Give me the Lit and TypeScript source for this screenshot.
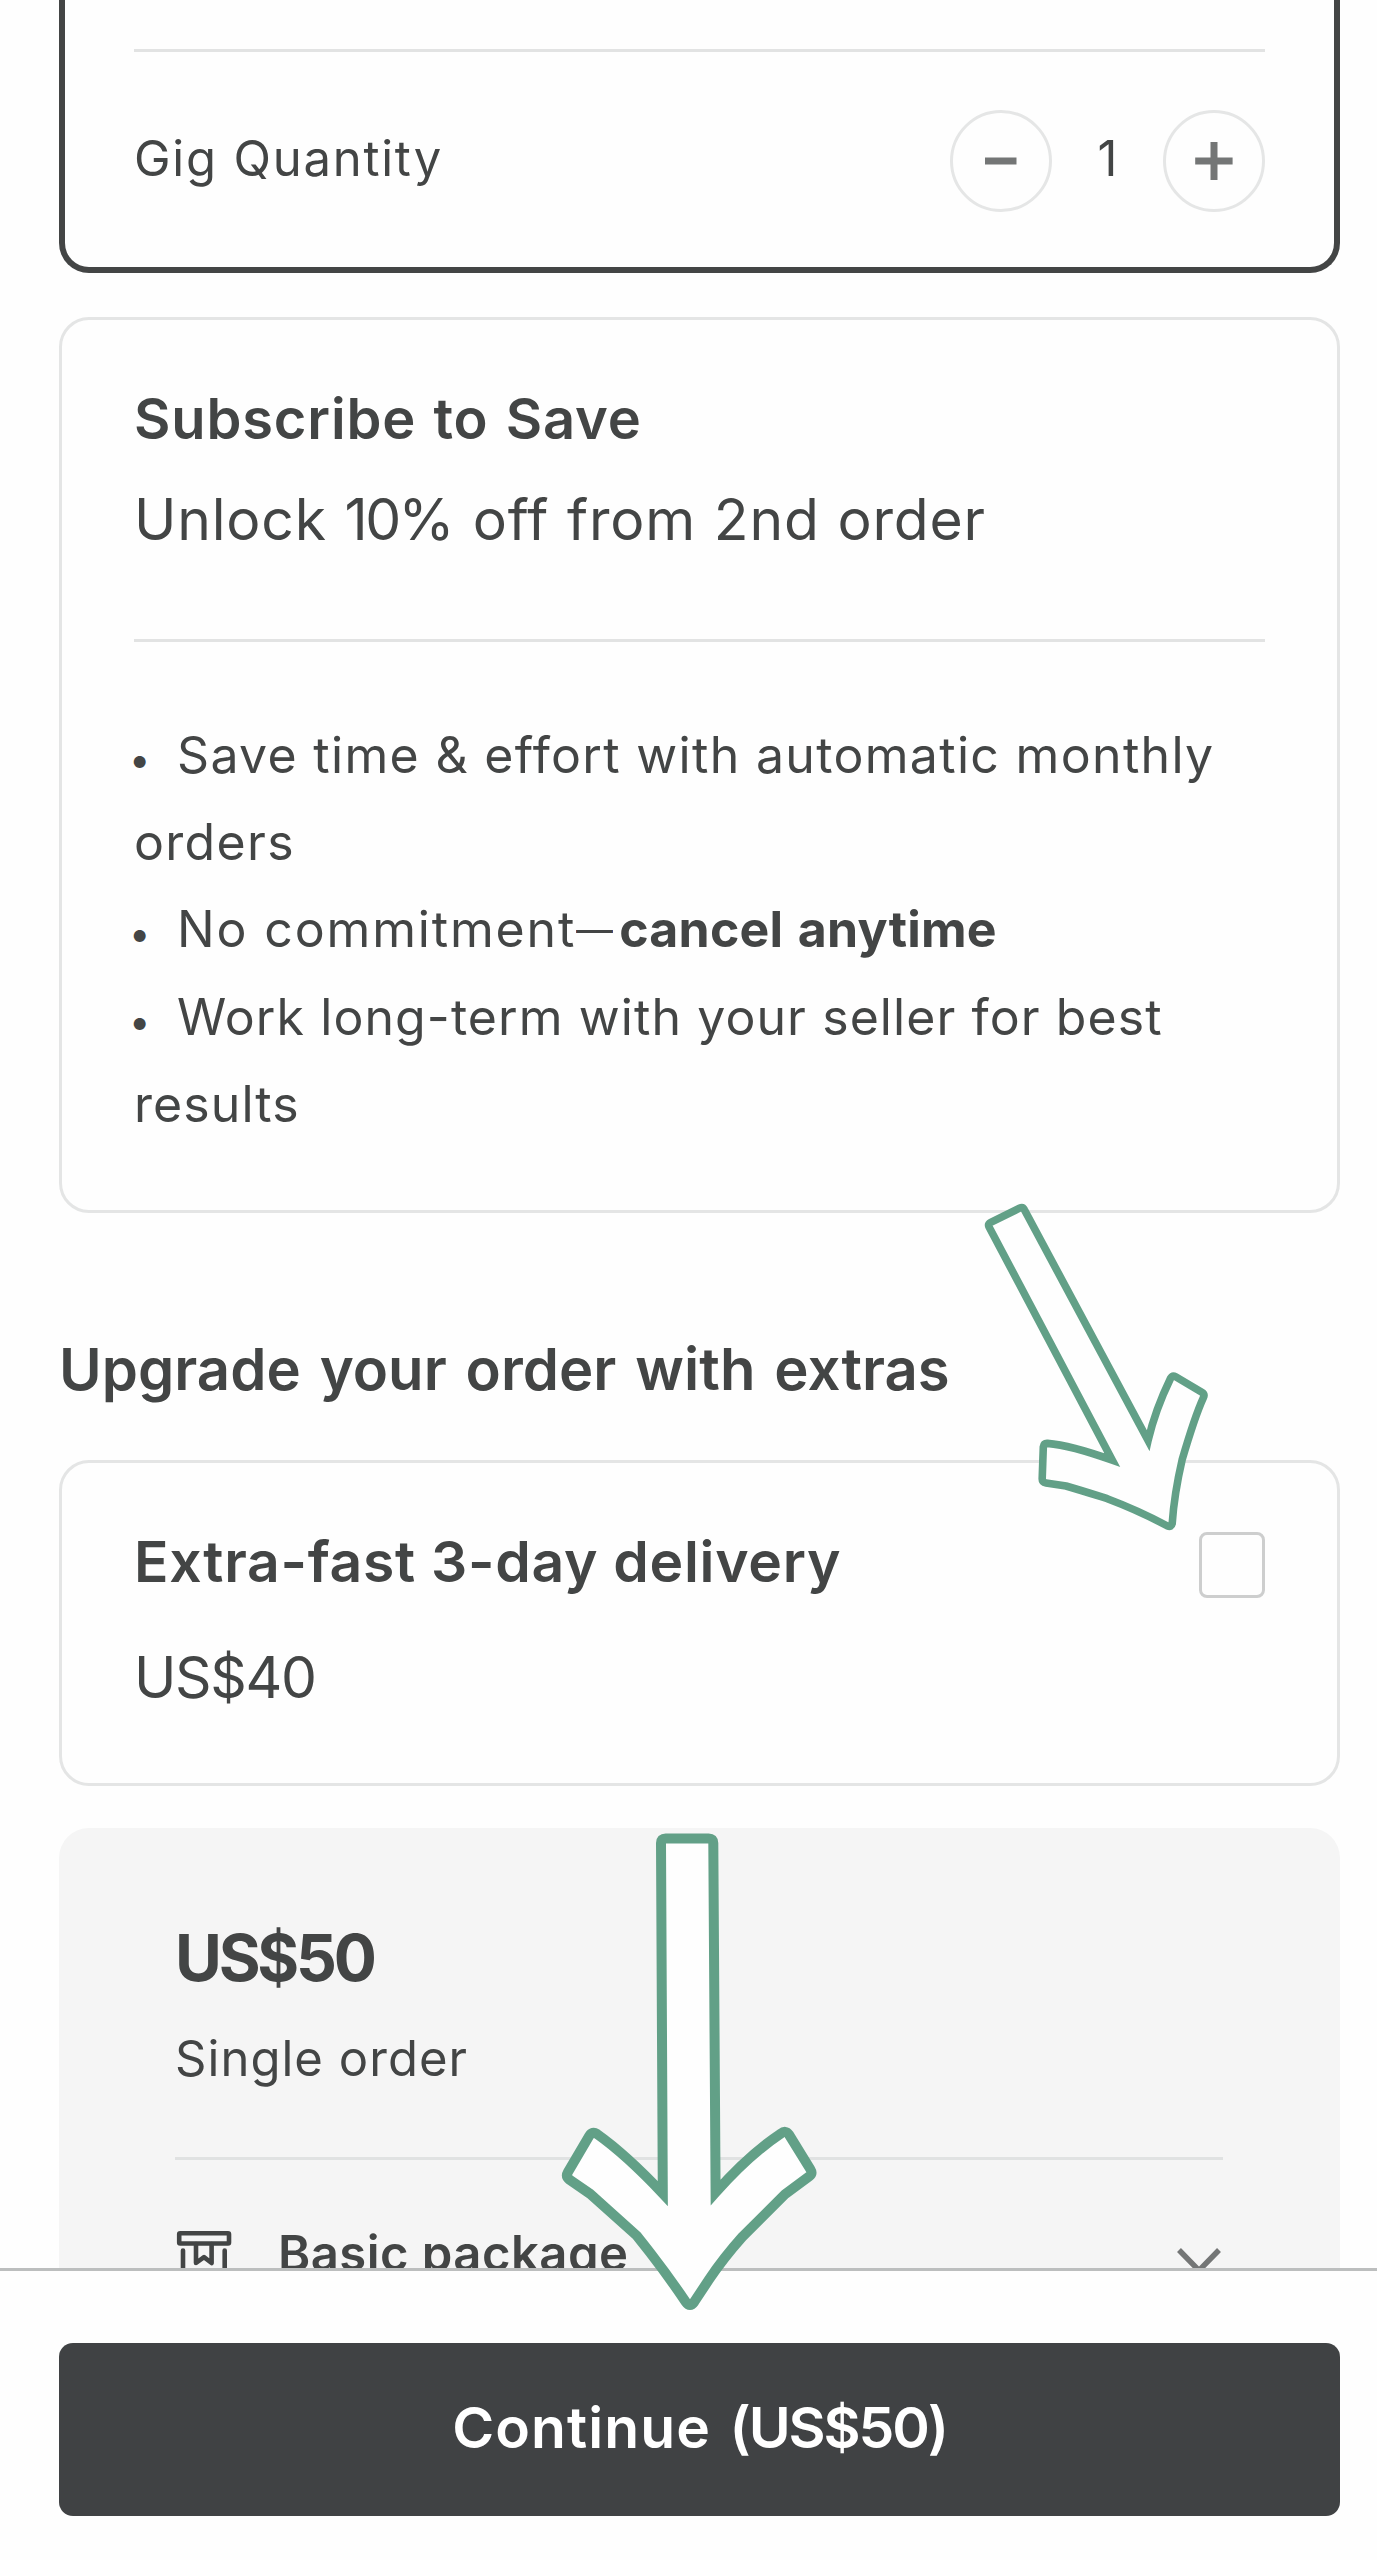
import { LitElement, html, css, svg } from "lit";
import { customElement, state } from "lit/decorators.js";

const minusIcon = html`<svg class="glyph" viewBox="0 0 40 40"><path d="M4 20H35.5" /></svg>`;
const plusIcon = html`<svg class="glyph" viewBox="0 0 40 40"><path d="M1.2 20H38.6M20 1V39" /></svg>`;

const packageIcon = html`
  <svg class="package" viewBox="0 0 58 56">
    <rect x="4.2" y="3.2" width="49.8" height="10.3" rx="1" />
    <path d="M8 20.5V53H49.7V20.5" />
    <path d="M21 14V33L29 27.2L36.6 33V14" />
  </svg>`;

const chevronIcon = html`
  <svg class="chevron" viewBox="0 0 46 26"><path d="M3 3L23 23.5L43 3" /></svg>`;

const deliveryArrow = svg`
  <path class="arrow slim" d="
    M989.2 1227.2 Q987.6 1224 990.8 1222.3
    L1019.5 1208.2 Q1022.8 1206.6 1024.4 1209.8
    L1148.1 1440.5 C1153.5 1417 1161 1398 1170.7 1378
    Q1172.6 1375 1175.7 1376.8
    L1201.8 1392.2 Q1205 1394.2 1203.4 1397.6
    C1195 1416 1188.5 1438 1182.2 1459.5 C1177 1482 1173.8 1500 1172.2 1523.5
    Q1171.4 1527.5 1167.5 1526
    C1148 1515.5 1128 1506.5 1107.3 1498.7 C1094 1494.5 1080 1490 1066 1486
    L1046 1482.9 Q1042 1482.2 1042.2 1478.5
    L1043.3 1447 Q1043.8 1443.2 1047.5 1443.4
    C1067 1445 1088 1451.5 1112.3 1460.2 Z" />`;

const continueArrow = svg`
  <path class="arrow thick" d="
    M661 1843 Q661 1838.4 665.6 1838.4 L708.7 1838.4 Q713.3 1838.4 713.3 1843
    L715.6 2192.5 C736 2169.5 757 2149.5 780.8 2133.6
    Q785.6 2129.8 788.8 2134.3
    L810.2 2169 Q813 2173.5 809 2176.5
    L785 2194.3 L742.5 2236.6 C731 2249.5 718 2266 709 2279.5
    L694.3 2301.8 Q690 2308 685.7 2301.8
    C675 2286 662 2268 650 2252.5 Q643 2243.5 636.7 2235.6
    L590 2193.8 L569.5 2179.7 Q565.4 2176.5 568 2172
    L589.3 2135.8 Q592.3 2131 597 2134
    C621 2151 642 2171.5 662.8 2193.5 Z" />`;

@customElement("app-root")
export class AppRoot extends LitElement {
  @state() private quantity = 1;

  static styles = css`
    :host {
      display: block;
      font-family: Inter, "Liberation Sans", sans-serif;
      color: #434545;
      font-size: 50px;
    }
    * { box-sizing: border-box; }
    .page {
      position: relative;
      display: flex;
      flex-direction: column;
      height: 2560px;
      overflow: hidden;
      background: #fefefe;
    }
    .scroll {
      height: 2268px;
      overflow: hidden;
      padding: 0 37px 0 59px;
      display: flex;
      flex-direction: column;
      flex: none;
    }
    .scroll > * { flex: none; }
    .card { border: 3px solid #e4e5e5; border-radius: 30px; padding: 0 72px; }
    .selected {
      border: 6px solid #434545;
      border-top: 0;
      border-radius: 0 0 30px 30px;
      padding: 49px 69px 55px;
    }
    .rule { height: 3px; background: #e2e3e3; }
    .qty { display: flex; align-items: center; justify-content: space-between; margin-top: 58px; height: 102px; }
    .qty-label { font-size: 49px; letter-spacing: 1.78px; padding-bottom: 6px; }
    .stepper { display: flex; align-items: center; justify-content: space-between; width: 315px; }
    .round {
      width: 102px; height: 102px; padding: 0;
      border: 3px solid #e5e6e6; border-radius: 50%;
      background: none;
      display: flex; align-items: center; justify-content: center;
    }
    .glyph { width: 40px; height: 40px; fill: none; stroke: #747676; stroke-width: 7; stroke-linejoin: round; }
    .count { font-size: 49px; padding-bottom: 6px; }

    .subscribe { margin-top: 44px; padding-top: 47px; padding-bottom: 62px; }
    .line { line-height: 102px; white-space: nowrap; }
    .title { font-size: 56px; font-weight: 600; letter-spacing: 0.85px; word-spacing: 2.3px; position: relative; top: 1px; }
    .offer { font-size: 57px; letter-spacing: 0.8px; word-spacing: 1px; }
    .percent { letter-spacing: -2.6px; margin-right: 3px; }
    .subscribe .rule { margin: 68px 0 70px; }
    .benefits { line-height: 87.2px; white-space: nowrap; }
    .dot { display: inline-block; width: 48px; margin-left: -5px; font-size: 38px; line-height: 1; }
    .b1 { letter-spacing: 1.32px; }
    .b2 { letter-spacing: 1.85px; }
    .b3 { letter-spacing: 1.08px; }
    .dash { display: inline-block; width: 43px; letter-spacing: 0; transform: scaleX(0.74); transform-origin: 0 50%; font-weight: 300; }
    .strong { font-weight: 700; letter-spacing: 0.2px; word-spacing: 2.5px; }

    .heading { margin-top: 121px; line-height: 70px; font-size: 58px; font-weight: 600; letter-spacing: 0.05px; word-spacing: 4.2px; }
    .extra { margin-top: 56px; padding-top: 64px; padding-bottom: 70px; display: flex; justify-content: space-between; }
    .extra-title { font-size: 57px; line-height: 70px; font-weight: 600; letter-spacing: 0.72px; }
    .extra-price { margin-top: 46px; font-size: 57px; line-height: 70px; letter-spacing: -1.35px; }
    .check { width: 66px; height: 66px; margin-top: 5px; border: 3px solid #cdcece; border-radius: 8px; }

    .summary { margin-top: 42px; background: #f5f5f5; border-radius: 30px; padding: 90px 117px 0 116px; height: 700px; }
    .total { font-size: 64px; line-height: 80px; font-weight: 700; letter-spacing: -3.2px; }
    .kind { margin-top: 31px; font-size: 49px; line-height: 60px; letter-spacing: 1.04px; }
    .summary .rule { margin-top: 68px; background: #e0e2e2; }
    .pack { display: flex; margin-top: 64px; }
    .pack-name { margin-left: 45px; flex: 1; font-size: 49px; line-height: 60px; font-weight: 600; letter-spacing: 0.46px; }
    .package { width: 58px; height: 56px; margin-top: 6px; fill: none; stroke: #434545; stroke-width: 4.6; stroke-linecap: round; stroke-linejoin: round; }
    .chevron { width: 46px; height: 26px; margin: 23px 1px 0 0; fill: none; stroke: #747676; stroke-width: 5.5; }

    .footer { flex: none; height: 292px; border-top: 3px solid #bcbebe; background: #fefefe; padding: 72px 37px 0 59px; }
    .continue {
      width: 100%; height: 173px; border: 0; border-radius: 14px;
      background: #404244; color: #fff;
      font: 600 57px Inter, "Liberation Sans", sans-serif;
      letter-spacing: 1.1px;
      word-spacing: 3px;
      padding: 0 0 4px;
    }
    .amount { letter-spacing: -2.1px; }
    .annotations { position: absolute; left: 0; top: 0; width: 1377px; height: 2560px; pointer-events: none; }
    .arrow { fill: #fefefe; stroke: #62a087; stroke-linejoin: miter; stroke-miterlimit: 8; }
    .slim { stroke-width: 7.6; }
    .thick { stroke-width: 10; }
  `;

  render() {
    return html`
      <div class="page">
        <div class="scroll">
          <section class="card selected">
            <div class="rule"></div>
            <div class="qty">
              <span class="qty-label">Gig Quantity</span>
              <div class="stepper">
                <button class="round" @click=${() => (this.quantity = Math.max(1, this.quantity - 1))}>${minusIcon}</button>
                <span class="count">${this.quantity}</span>
                <button class="round" @click=${() => this.quantity++}>${plusIcon}</button>
              </div>
            </div>
          </section>

          <section class="card subscribe">
            <div class="line title">Subscribe to Save</div>
            <div class="line offer">Unlock <span class="percent">10%</span> off from 2nd order</div>
            <div class="rule"></div>
            <div class="benefits">
              <div class="b1"><span class="dot">•</span>Save time &amp; effort with automatic monthly<br />orders</div>
              <div class="b2"><span class="dot">•</span>No commitment<span class="dash">—</span><span class="strong">cancel anytime</span></div>
              <div class="b3"><span class="dot">•</span>Work long-term with your seller for best<br />results</div>
            </div>
          </section>

          <div class="heading">Upgrade your order with extras</div>

          <section class="card extra">
            <div>
              <div class="extra-title">Extra-fast 3-day delivery</div>
              <div class="extra-price">US$40</div>
            </div>
            <div class="check"></div>
          </section>

          <section class="summary">
            <div class="total">US$50</div>
            <div class="kind">Single order</div>
            <div class="rule"></div>
            <div class="pack">
              ${packageIcon}
              <span class="pack-name">Basic package</span>
              ${chevronIcon}
            </div>
          </section>
        </div>

        <div class="footer"><button class="continue">Continue <span class="amount">(US$50)</span></button></div>

        <svg class="annotations" viewBox="0 0 1377 2560">${deliveryArrow}${continueArrow}</svg>
      </div>
    `;
  }
}
